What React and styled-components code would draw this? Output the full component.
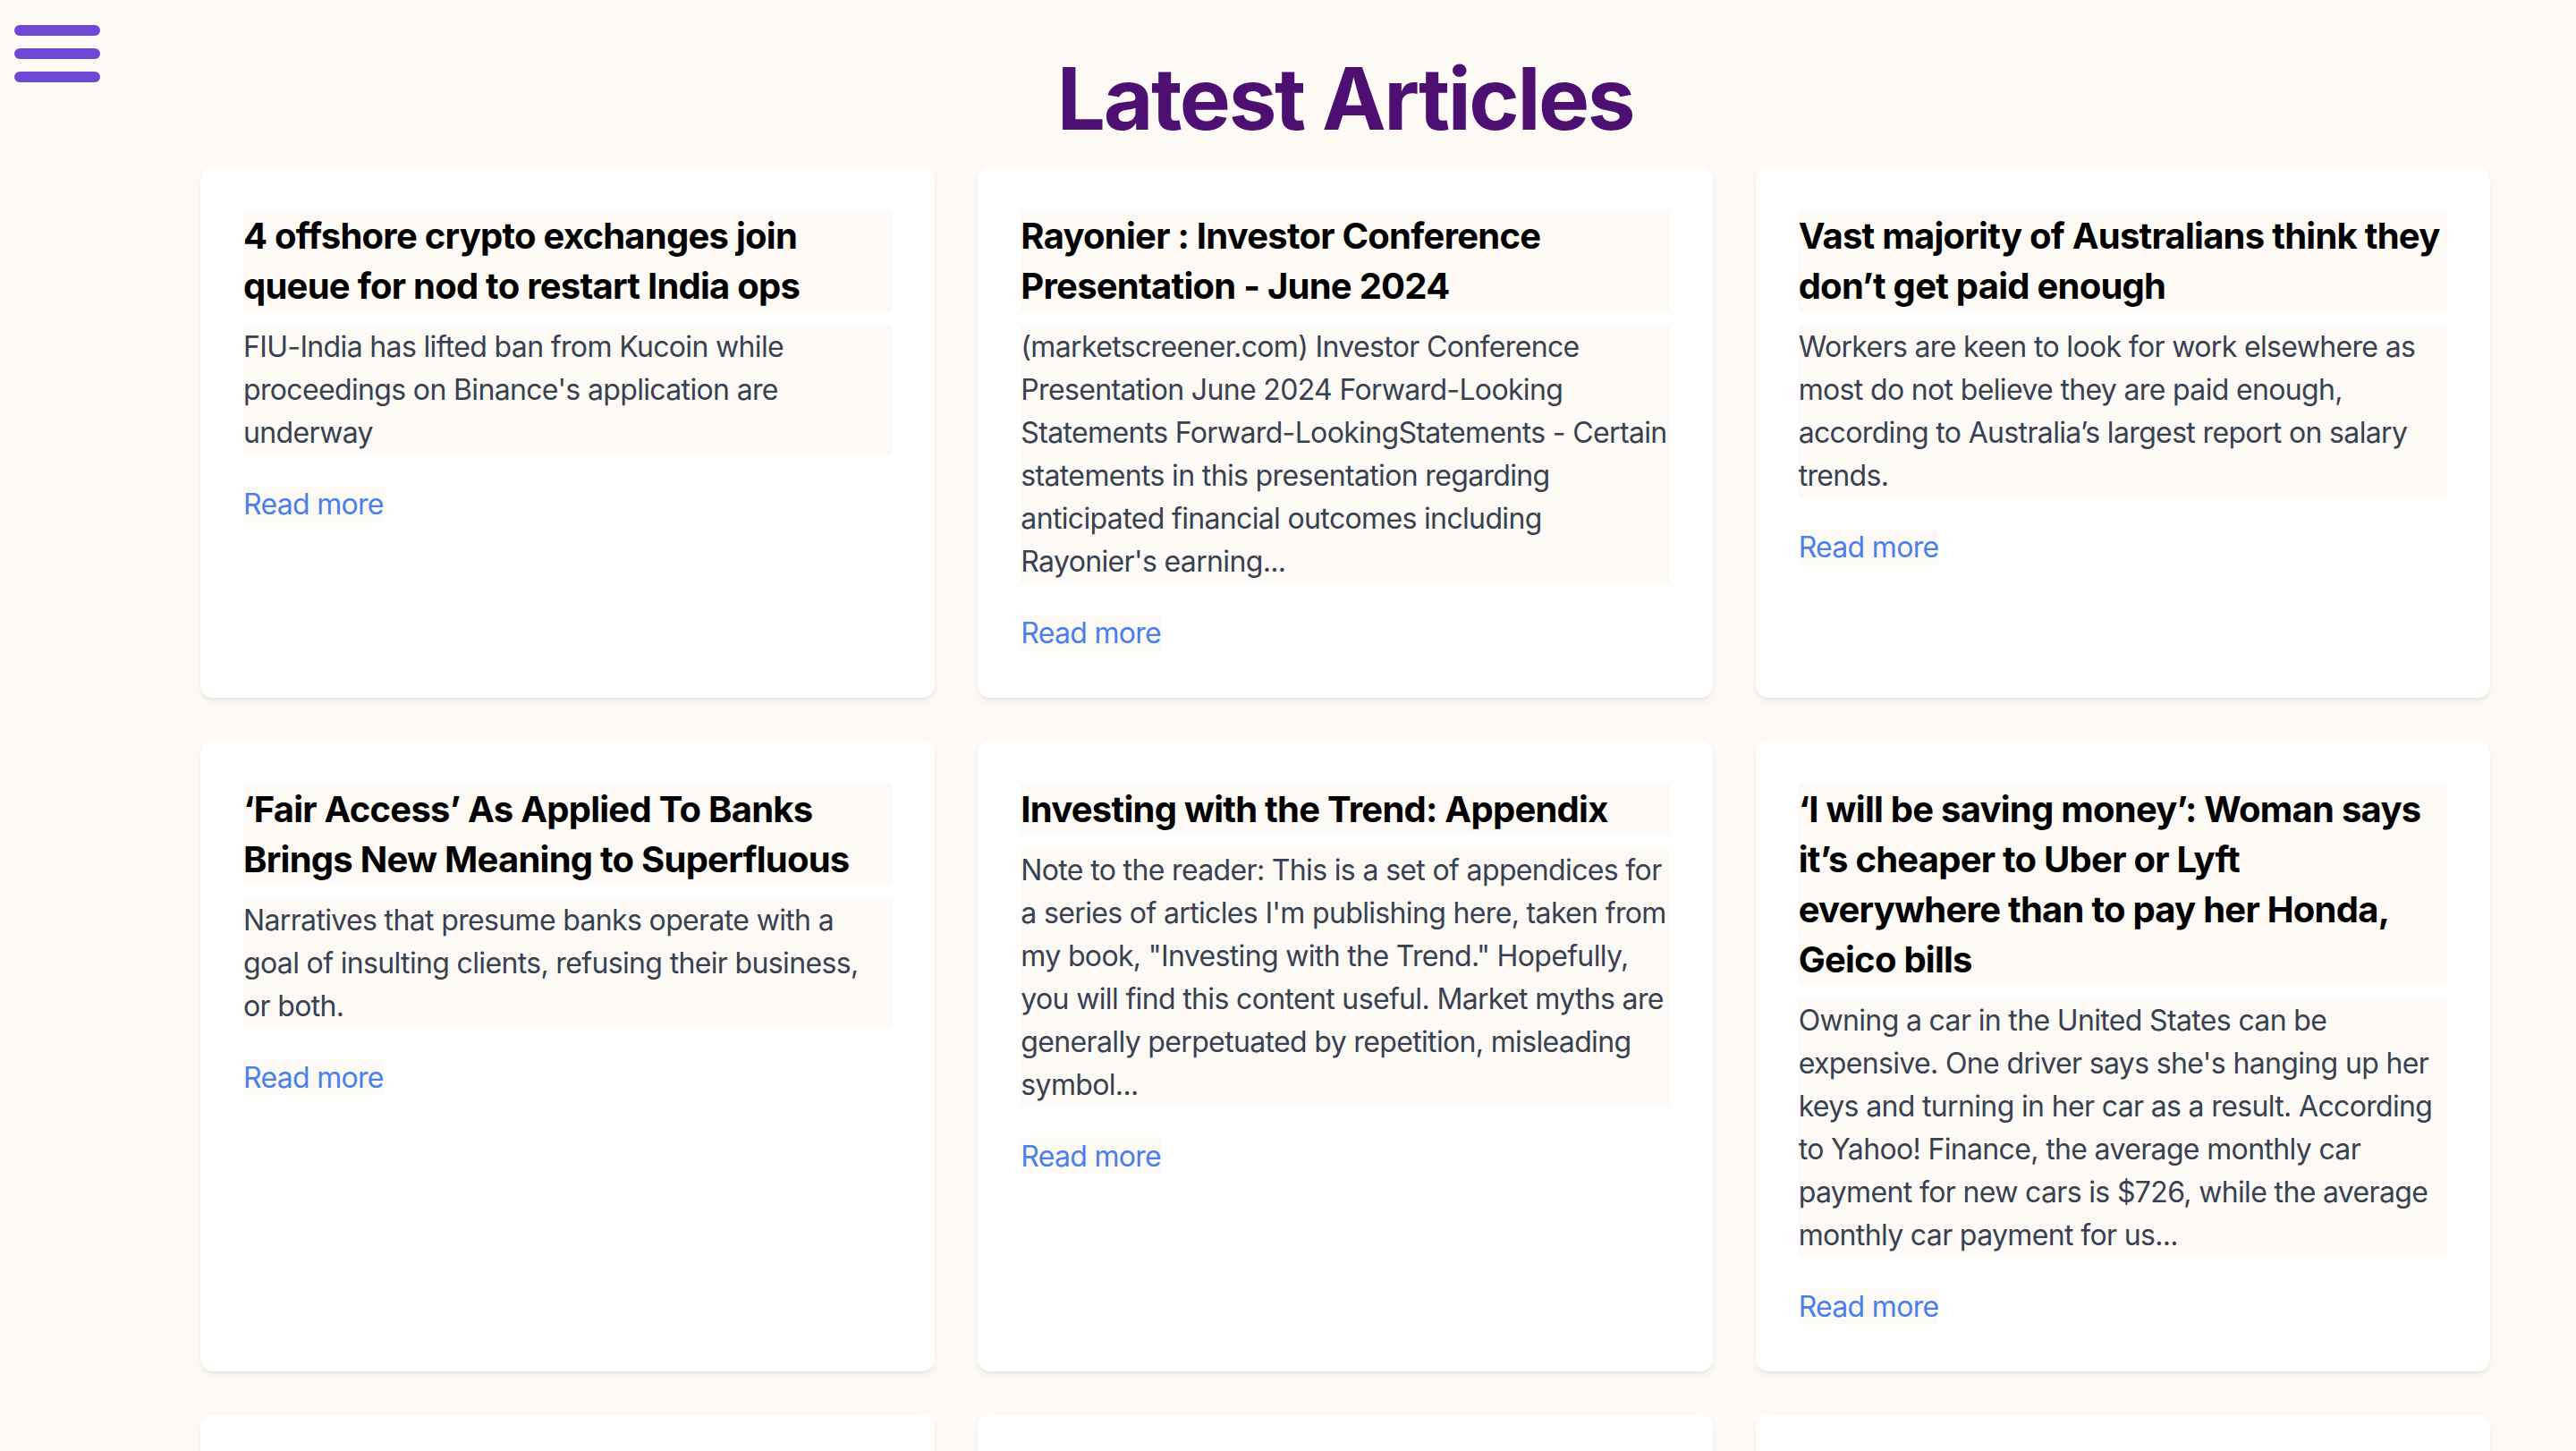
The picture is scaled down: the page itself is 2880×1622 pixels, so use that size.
import React from 'react';
import styled, { createGlobalStyle } from 'styled-components';

const articles = [
  {
    title: '4 offshore crypto exchanges join queue for nod to restart India ops',
    description:
      "FIU-India has lifted ban from Kucoin while proceedings on Binance's application are underway",
  },
  {
    title: 'Rayonier : Investor Conference Presentation - June 2024',
    description:
      "(marketscreener.com) Investor Conference Presentation June 2024 Forward-Looking Statements Forward-LookingStatements - Certain statements in this presentation regarding anticipated financial outcomes including Rayonier's earning...",
  },
  {
    title: 'Vast majority of Australians think they don’t get paid enough',
    description:
      'Workers are keen to look for work elsewhere as most do not believe they are paid enough, according to Australia’s largest report on salary trends.',
  },
  {
    title: '‘Fair Access’ As Applied To Banks Brings New Meaning to Superfluous',
    description:
      'Narratives that presume banks operate with a goal of insulting clients, refusing their business, or both.',
  },
  {
    title: 'Investing with the Trend: Appendix',
    description:
      'Note to the reader: This is a set of appendices for a series of articles I\'m publishing here, taken from my book, "Investing with the Trend." Hopefully, you will find this content useful. Market myths are generally perpetuated by repetition, misleading symbol...',
  },
  {
    title:
      '‘I will be saving money’: Woman says it’s cheaper to Uber or Lyft everywhere than to pay her Honda, Geico bills',
    description:
      "Owning a car in the United States can be expensive. One driver says she's hanging up her keys and turning in her car as a result. According to Yahoo! Finance, the average monthly car payment for new cars is $726, while the average monthly car payment for us...",
  },
  {
    title: 'Markets weigh fresh inflation data ahead of the Fed meeting',
    description: 'Investors look to the latest figures for clues on the path of interest rates.',
  },
  {
    title: 'Oil prices steady as traders eye supply outlook',
    description: 'Crude held near recent levels while analysts debate demand for the rest of the year.',
  },
  {
    title: 'Small businesses adapt to changing consumer habits',
    description: 'Owners describe how they are adjusting prices and services to keep customers.',
  },
];

const GlobalStyle = createGlobalStyle`
  * {
    box-sizing: border-box;
  }
  body {
    margin: 0;
    background: #fdfaf5;
    font-family: Inter, "Noto Sans", sans-serif;
    -webkit-font-smoothing: antialiased;
  }
`;

const Page = styled.div`
  display: flex;
  min-height: 100vh;
`;

const Sidebar = styled.aside`
  width: 128px;
  flex-shrink: 0;
  padding: 28px 16px;
`;

const MenuButton = styled.button`
  display: flex;
  flex-direction: column;
  gap: 14px;
  padding: 0;
  border: none;
  background: transparent;
  cursor: pointer;
  span {
    display: block;
    width: 96px;
    height: 12px;
    border-radius: 6px;
    background: #6f48d3;
  }
`;

const Main = styled.main`
  flex: 1;
  padding: 0 96px 48px;
`;

const Heading = styled.h1`
  margin: 53px 0 19px;
  text-align: center;
  font-size: 96px;
  line-height: 1.2;
  font-weight: 700;
  letter-spacing: -2.4px;
  color: #4d1072;
`;

const Grid = styled.div`
  display: grid;
  grid-template-columns: repeat(3, 1fr);
  gap: 48px;
`;

const Card = styled.article`
  padding: 48px;
  background: #fff;
  border-radius: 14px;
  box-shadow: 0 4px 8px -2px rgba(80, 60, 30, 0.12), 0 2px 4px -2px rgba(80, 60, 30, 0.08);
`;

const Title = styled.h2`
  margin: 0 0 16px;
  padding-top: 1px;
  background: #fdfaf5;
  font-size: 40px;
  line-height: 56px;
  font-weight: 700;
  letter-spacing: -0.75px;
  color: #000;
`;

const Description = styled.p`
  margin: 0 0 32px;
  background: #fdfaf5;
  font-size: 32px;
  line-height: 48px;
  letter-spacing: -0.65px;
  color: #374151;
`;

const LinkRow = styled.p`
  margin: 0;
  font-size: 32px;
  line-height: 48px;
  letter-spacing: -0.7px;
`;

const ReadMore = styled.a`
  background: #fdfaf5;
  color: #4a80ea;
  text-decoration: none;
`;

const ArticleCard = ({ title, description }) => (
  <Card>
    <Title>{title}</Title>
    <Description>{description}</Description>
    <LinkRow>
      <ReadMore href="#!">Read more</ReadMore>
    </LinkRow>
  </Card>
);

const App = () => (
  <>
    <GlobalStyle />
    <Page>
      <Sidebar>
        <MenuButton aria-label="Open menu">
          <span />
          <span />
          <span />
        </MenuButton>
      </Sidebar>
      <Main>
        <Heading>Latest Articles</Heading>
        <Grid>
          {articles.map(a => (
            <ArticleCard key={a.title} {...a} />
          ))}
        </Grid>
      </Main>
    </Page>
  </>
);

export default App;
